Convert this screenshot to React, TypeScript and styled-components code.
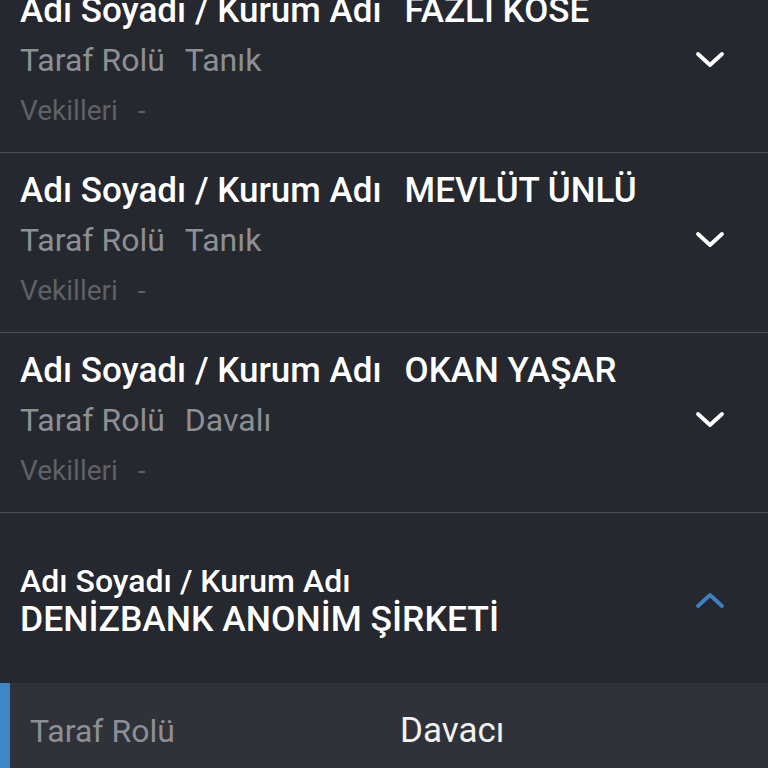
import styled, { createGlobalStyle } from 'styled-components';

const GlobalStyle = createGlobalStyle`
  html, body {
    margin: 0;
    padding: 0;
    background: #25282e;
    overflow: hidden;
  }

  body {
    font-family: Roboto, 'Noto Sans', sans-serif;
  }
`;

const Screen = styled.div`
  width: 768px;
  height: 768px;
  overflow: hidden;
  background: #25282e;
`;

const List = styled.div`
  margin-top: -27px;
`;

const Row = styled.div`
  display: flex;
  align-items: center;
  padding: 12px 43px 17px 20px;
  border-bottom: 1px solid #4b4e54;
`;

const Info = styled.div`
  flex: 1;
  min-width: 0;
`;

const Line = styled.div<{ $gap?: number }>`
  display: flex;
  gap: ${({ $gap = 20 }) => $gap}px;
  height: 50px;
  align-items: center;
  white-space: nowrap;
`;

const Title = styled.span`
  color: #ffffff;
  font-size: 35px;
  font-weight: 500;
`;

const Meta = styled.span<{ $dim?: boolean }>`
  color: ${({ $dim }) => ($dim ? '#5e6167' : '#8c8f94')};
  font-size: ${({ $dim }) => ($dim ? '28px' : '32px')};
`;

const ExpandedRow = styled.div`
  display: flex;
  align-items: center;
  height: 170px;
  padding: 4px 43px 0 20px;
  box-sizing: border-box;
`;

const SmallLabel = styled.div`
  color: #ffffff;
  font-size: 32px;
  font-weight: 500;
  line-height: 38px;
`;

const BigValue = styled.div`
  color: #ffffff;
  font-size: 35.5px;
  font-weight: 500;
  line-height: 38px;
`;

const Detail = styled.div`
  background: #2f3239;
  border-left: 10px solid #3f86c6;
  height: 120px;
  padding: 24px 0 0 20px;
  display: grid;
  grid-template-columns: 370px 1fr;
  align-items: start;
  box-sizing: border-box;
`;

const DetailLabel = styled.span`
  color: #8c8f94;
  font-size: 32px;
  line-height: 48px;
`;

const DetailValue = styled.span`
  color: #f2f2f2;
  font-size: 35px;
  line-height: 48px;
`;

const Chevron = ({ up = false }: { up?: boolean }) => (
  <svg width="30" height="18" viewBox="0 0 30 18" fill="none">
    <path
      d={up ? 'M3 15 L15 4 L27 15' : 'M3 3 L15 14 L27 3'}
      stroke={up ? '#3d7fc0' : '#ffffff'}
      strokeWidth="3.8"
      strokeLinecap="round"
      strokeLinejoin="round"
    />
  </svg>
);

const parties = [
  { name: 'FAZLI KÖSE', role: 'Tanık' },
  { name: 'MEVLÜT ÜNLÜ', role: 'Tanık' },
  { name: 'OKAN YAŞAR', role: 'Davalı' },
];

export default function App() {
  return (
    <Screen>
      <GlobalStyle />
      <List>
        {parties.map(p => (
          <Row key={p.name}>
            <Info>
              <Line $gap={23}>
                <Title>Adı Soyadı / Kurum Adı</Title>
                <Title>{p.name}</Title>
              </Line>
              <Line>
                <Meta>Taraf Rolü</Meta>
                <Meta>{p.role}</Meta>
              </Line>
              <Line>
                <Meta $dim>Vekilleri</Meta>
                <Meta $dim>-</Meta>
              </Line>
            </Info>
            <Chevron />
          </Row>
        ))}
        <ExpandedRow>
          <Info>
            <SmallLabel>Adı Soyadı / Kurum Adı</SmallLabel>
            <BigValue>DENİZBANK ANONİM ŞİRKETİ</BigValue>
          </Info>
          <Chevron up />
        </ExpandedRow>
        <Detail>
          <DetailLabel>Taraf Rolü</DetailLabel>
          <DetailValue>Davacı</DetailValue>
        </Detail>
      </List>
    </Screen>
  );
}
